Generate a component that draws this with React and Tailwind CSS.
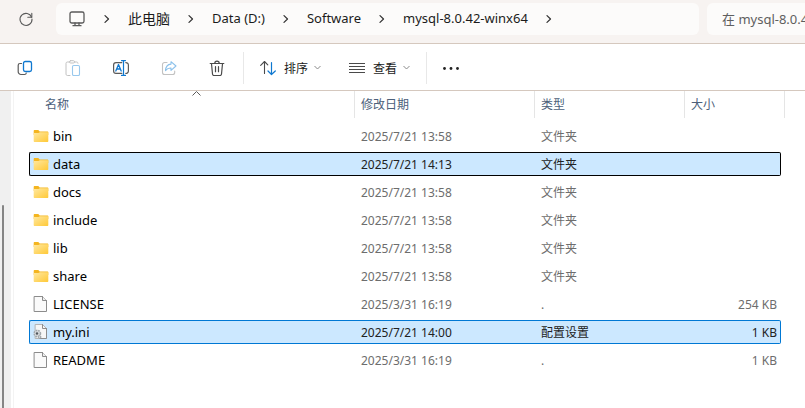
import React, { useState } from 'react';

const files = [
  { name: 'bin', date: '2025/7/21 13:58', type: '文件夹', size: '', icon: 'folder' },
  { name: 'data', date: '2025/7/21 14:13', type: '文件夹', size: '', icon: 'folder' },
  { name: 'docs', date: '2025/7/21 13:58', type: '文件夹', size: '', icon: 'folder' },
  { name: 'include', date: '2025/7/21 13:58', type: '文件夹', size: '', icon: 'folder' },
  { name: 'lib', date: '2025/7/21 13:58', type: '文件夹', size: '', icon: 'folder' },
  { name: 'share', date: '2025/7/21 13:58', type: '文件夹', size: '', icon: 'folder' },
  { name: 'LICENSE', date: '2025/3/31 16:19', type: '.', size: '254 KB', icon: 'file' },
  { name: 'my.ini', date: '2025/7/21 14:00', type: '配置设置', size: '1 KB', icon: 'config' },
  { name: 'README', date: '2025/3/31 16:19', type: '.', size: '1 KB', icon: 'file' },
];

const path = ['此电脑', 'Data (D:)', 'Software', 'mysql-8.0.42-winx64'];

const Icon = ({ className = '', children }) => (
  <svg width="16" height="16" viewBox="0 0 16 16" fill="none" strokeLinecap="round" strokeLinejoin="round" className={`shrink-0 ${className}`} aria-hidden="true">
    {children}
  </svg>
);

const FolderIcon = () => (
  <Icon>
    <path d="M.7 3c0-.6.4-1 1-1h3.600l1.400 1.400h7.600c.6 0 1 .4 1 1V7H.7z" fill="#f4b51f" />
    <path d="M.7 5h4.800l1.300-.7h8.500v8.700c0 .6-.4 1-1 1H1.700c-.6 0-1-.4-1-1z" fill="url(#folderFront)" />
  </Icon>
);

const FileIcon = () => (
  <Icon>
    <path d="M1.500.5h8l4 4v11h-12z" fill="#fafafa" stroke="#8c8c8c" />
    <path d="M9.500.5v4h4" fill="#f0f0f0" stroke="#8c8c8c" />
  </Icon>
);

const ConfigIcon = () => (
  <Icon>
    <path d="M2.500.5h7l4 4v10h-11z" fill="#f6f6f6" stroke="#b5b5b5" />
    <path d="M13.500 4.500v10h-7M9.500.5v4h4" stroke="#8c8c8c" />
    <circle cx="4.300" cy="9.500" r="3.200" fill="#d5d9dc" stroke="#a2a8ac" strokeWidth="1.500" strokeDasharray="1.700 .9" strokeLinecap="butt" />
    <circle cx="4" cy="9.500" r="1.200" fill="#4f565c" />
    <circle cx="6.500" cy="13" r="1.300" fill="#d5d9dc" stroke="#a2a8ac" />
  </Icon>
);

const fileIcons = { folder: FolderIcon, file: FileIcon, config: ConfigIcon };

const ChevronDown = () => (
  <svg width="7" height="5" viewBox="0 0 7 5" fill="none" stroke="#8a8a8a" aria-hidden="true">
    <path d="M.5 1l3 3 3-3" />
  </svg>
);

const ChevronRight = () => (
  <svg width="6" height="8" viewBox="0 0 6 8" fill="none" stroke="#333333" strokeWidth="1.200" strokeLinecap="round" strokeLinejoin="round" aria-hidden="true">
    <path d="M1 .6l3.500 3.400L1 7.400" />
  </svg>
);

const ToolButton = ({ label, disabled, children }) => (
  <button type="button" aria-label={label} disabled={disabled} className="w-12 h-8 flex items-center justify-center">
    {children}
  </button>
);

const Divider = () => <div className="w-px h-8 bg-[#e8e8e8]" />;

export default function App() {
  const [selected, setSelected] = useState(['data', 'my.ini']);

  const rowStyle = (name) => {
    if (!selected.includes(name)) return 'border-transparent text-[#6d6d6d]';
    return name === 'data'
      ? 'bg-[#cce8ff] border-black text-[#222222]'
      : 'bg-[#cce8ff] border-[#0078d4] text-[#222222]';
  };

  return (
    <div className="min-h-screen flex flex-col overflow-hidden bg-white font-['Noto_Sans','Noto_Sans_CJK_SC',sans-serif] text-xs text-[#1b1b1b]">
      <svg width="0" height="0" className="absolute" aria-hidden="true">
        <linearGradient id="folderFront" x1="0" y1="0" x2="1" y2="1">
          <stop offset="0" stopColor="#ffe8a0" />
          <stop offset="1" stopColor="#ffc937" />
        </linearGradient>
      </svg>

      {/* Address bar */}
      <header className="h-11 flex items-start pt-[3px] bg-[#f7f3f1] border-b border-[#d5c8be] text-[13px]">
        <button type="button" aria-label="刷新" className="w-14 h-8 pr-1 flex items-center justify-center">
          <Icon className="stroke-[#5a5a5a]">
            <path d="M13.600 6.200A6 6 0 1 0 14 8" strokeWidth="1.100" />
            <path d="M13.800 2.200v4h-4" strokeWidth="1.100" />
          </Icon>
        </button>
        <nav aria-label="地址" className="flex-1 min-w-0 h-8 pl-3 flex items-center rounded-md bg-[#fcfbfa] whitespace-nowrap">
          <svg width="18" height="16" viewBox="0 0 18 16" fill="none" stroke="#5a5a5a" strokeWidth="1.300" strokeLinecap="round" aria-hidden="true">
            <rect x="2" y="1" width="14" height="11" rx="1.800" />
            <path d="M7 12v2.500M11 12v2.500M5 14.700h8" />
          </svg>
          {path.map((item) => (
            <React.Fragment key={item}>
              <span className="w-[42px] flex justify-center"><ChevronRight /></span>
              <a href="#" className={item === '此电脑' ? 'text-sm' : ''}>{item}</a>
            </React.Fragment>
          ))}
          <span className="w-[42px] flex justify-center"><ChevronRight /></span>
        </nav>
        <input
          type="text"
          aria-label="搜索"
          placeholder="在 mysql-8.0.42-winx64 中搜索"
          className="w-[98px] h-8 ml-2 pl-[15px] rounded-l-md bg-[#fcfbfa] outline-none placeholder:text-[#5f5f5f]"
        />
      </header>

      {/* Command bar */}
      <div className="h-[47px] flex items-center pt-px pl-px border-b border-[#d5c8be]">
        <ToolButton label="复制">
          <Icon>
            <path d="M4.500 3.500H3a1.800 1.800 0 0 0-1.800 1.800v6.400A2.800 2.800 0 0 0 4 14.500h3.500a1.800 1.800 0 0 0 1.800-1.500" stroke="#5a5a5a" strokeWidth="1.200" />
            <rect x="6.500" y="1.500" width="8" height="10" rx="1.800" stroke="#0f78d0" strokeWidth="1.300" />
          </Icon>
        </ToolButton>
        <ToolButton label="粘贴" disabled>
          <Icon>
            <path d="M4.500 2H2.300C1.600 2 1 2.600 1 3.300v10.900c0 .7.6 1.300 1.300 1.300H5M9.500 2h2.200c.7 0 1.300.6 1.300 1.300" stroke="#c2c2c2" />
            <rect x="4.500" y=".7" width="5" height="2.300" rx="1.100" stroke="#c2c2c2" />
            <rect x="7.500" y="5.500" width="7" height="10" rx="1.200" stroke="#98c8ed" strokeWidth="1.100" />
          </Icon>
        </ToolButton>
        <ToolButton label="重命名">
          <Icon>
            <path d="M8.800 2.600H3A2.500 2.500 0 0 0 .6 5.100v5.800A2.500 2.500 0 0 0 3 13.400h5.800M12.800 2.600A2.500 2.500 0 0 1 15.400 5.100v5.800a2.500 2.500 0 0 1-2.600 2.500" stroke="#5a5a5a" strokeWidth="1.200" />
            <path d="M2.800 11l2.700-6.500L8.200 11M3.700 9h3.600" stroke="#0f78d0" strokeWidth="1.300" />
            <path d="M10.500.6v14.800M8.500.6h4M8.500 15.400h4" stroke="#0f78d0" strokeWidth="1.200" />
          </Icon>
        </ToolButton>
        <ToolButton label="共享" disabled>
          <Icon>
            <path d="M6 2.500H3.500a2 2 0 0 0-2 2v8a2 2 0 0 0 2 2h8.200a2 2 0 0 0 2-2V11" stroke="#c2c2c2" strokeWidth="1.100" />
            <path d="M10 1.700l5 4.300-5 4.300V8C7.500 7.800 6 8.700 4.500 10.600 4.700 7 6.500 4.400 10 4.100z" stroke="#8bc1eb" strokeWidth="1.100" />
          </Icon>
        </ToolButton>
        <ToolButton label="删除">
          <Icon className="stroke-[#4a4a4a]">
            <path d="M1.200 3.500h13.600M5.800 3.300a2.200 2.200 0 0 1 4.400 0M2.500 3.700l1 10.300c.1.900.7 1.500 1.500 1.500h6c.8 0 1.400-.6 1.500-1.500l1-10.300M6.500 6.700v5M9.500 6.700v5" strokeWidth="1.200" />
          </Icon>
        </ToolButton>
        <div className="ml-0.5"><Divider /></div>
        <button type="button" className="h-8 ml-4 flex items-center">
          <Icon>
            <path d="M4.500 13.500v-12M.7 5.300l3.800-3.800 3.300 3.300" stroke="#4a4a4a" strokeWidth="1.100" />
            <path d="M11.500 2.500v12M8 11l3.500 3.500L15.300 11" stroke="#0f78d0" strokeWidth="1.200" />
          </Icon>
          <span className="ml-2 mr-1.5 pt-0.5">排序</span>
          <ChevronDown />
        </button>
        <button type="button" className="h-8 ml-7 flex items-center">
          <Icon className="stroke-[#4a4a4a]">
            <path d="M0 3.500h16M0 6.500h16M0 9.500h16M0 12.500h16" strokeLinecap="butt" />
          </Icon>
          <span className="ml-2 mr-1.5 pt-0.5">查看</span>
          <ChevronDown />
        </button>
        <div className="ml-4"><Divider /></div>
        <button type="button" aria-label="更多" className="h-8 ml-4">
          <Icon className="fill-[#222222]">
            <circle cx="1.500" cy="8.500" r="1.400" />
            <circle cx="8" cy="8.500" r="1.400" />
            <circle cx="14.500" cy="8.500" r="1.400" />
          </Icon>
        </button>
      </div>

      <main className="flex-1 flex">
        {/* Scrollbar of the navigation pane */}
        <div className="w-[11px] pl-0.5 pt-[114px] flex bg-[#f0f0f0]">
          <div className="w-0.5 rounded-t-sm bg-[#858585]" />
        </div>
        <div className="w-0.5" />
        <section className="flex-1 min-w-0 pl-[15px] border-l border-[#f3f3f3]">
          <table className="w-[756px] -mt-1 table-fixed border-separate border-spacing-x-0 border-spacing-y-1">
            <colgroup>
              <col className="w-[326px]" />
              <col className="w-[180px]" />
              <col className="w-[150px]" />
              <col />
              <col className="w-1" />
            </colgroup>
            <thead>
              <tr className="h-[29px] text-left text-[#4c607a]">
                <th className="relative p-0 align-top font-normal">
                  <div className="h-[27px] pl-4 flex items-center border-r border-[#e5e5e5]">名称</div>
                  <svg width="9" height="5" viewBox="0 0 9 5" fill="none" stroke="#5a5a5a" className="absolute top-0 left-1/2" aria-hidden="true">
                    <path d="M.5 4.500l4-4 4 4" />
                  </svg>
                </th>
                <th className="p-0 align-top font-normal">
                  <div className="h-[27px] pl-1.5 flex items-center border-r border-[#e5e5e5]">修改日期</div>
                </th>
                <th className="p-0 align-top font-normal">
                  <div className="h-[27px] pl-1.5 flex items-center border-r border-[#e5e5e5]">类型</div>
                </th>
                <th colSpan={2} className="p-0 align-top font-normal">
                  <div className="h-[27px] pl-1.5 flex items-center border-r border-[#e5e5e5]">大小</div>
                </th>
              </tr>
            </thead>
            <tbody>
              {files.map((file) => {
                const RowIcon = fileIcons[file.icon];
                const style = rowStyle(file.name);
                return (
                  <tr key={file.name} className="h-6 leading-4" onClick={() => setSelected([file.name])}>
                    <td className={`p-0 pl-[3px] border-y border-l rounded-l-xs ${style}`}>
                      <div className="flex items-center gap-1 text-[13px] text-black">
                        <RowIcon />
                        {file.name}
                      </div>
                    </td>
                    <td className={`p-0 pt-0.5 pl-1.5 border-y ${style}`}>{file.date}</td>
                    <td className={`p-0 pt-0.5 pl-1.5 border-y ${style}`}>{file.type}</td>
                    <td className={`p-0 pt-0.5 pr-[3px] border-y border-r rounded-r-xs text-right ${style}`}>{file.size}</td>
                    <td className="p-0" />
                  </tr>
                );
              })}
            </tbody>
          </table>
        </section>
      </main>
    </div>
  );
}
